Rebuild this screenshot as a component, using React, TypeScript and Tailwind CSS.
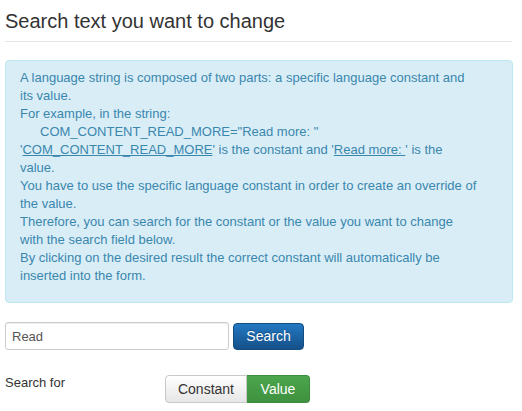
import React, { useState } from "react";

const App: React.FC = () => {
  const [query, setQuery] = useState("Read");
  const [mode, setMode] = useState<"constant" | "value">("value");

  return (
    <div className="min-h-[411px] bg-white px-[5px] pt-[2px] font-['Liberation_Sans',Arial,sans-serif] text-[13px] text-[#333]">
      <h2 className="border-b border-[#e5e5e5] w-[507px] text-[20px] leading-[39px] font-normal text-[#333]">
        Search text you want to change
      </h2>

      <div className="mt-[18px] w-[508px] rounded-[4px] border border-[#bce8f1] bg-[#d9edf7] pl-[14px] pr-[35px] pt-[8px] pb-[17px] text-[13px] leading-[18px] text-[#3a87ad]">
        <p>
          A language string is composed of two parts: a specific language constant and its value.
          <br />
          For example, in the string:
          <br />
          <span className="pl-[20px]">COM_CONTENT_READ_MORE="Read more: "</span>
          <br />
          '<span className="underline">COM_CONTENT_READ_MORE</span>' is the constant and '
          <span className="underline whitespace-pre">Read more: </span>' is the value.
          <br />
          You have to use the specific language constant in order to create an override of the value.
          <br />
          Therefore, you can search for the constant or the value you want to change with the search field below.
          <br />
          By clicking on the desired result the correct constant will automatically be inserted into the form.
        </p>
      </div>

      <form onSubmit={(e) => e.preventDefault()} className="mt-[19px] flex items-center gap-[4px]">
        <input
          type="text"
          value={query}
          onChange={(e) => setQuery(e.target.value)}
          className="h-[28px] w-[224px] rounded-[3px] border border-[#ccc] px-[6px] text-[13px] text-[#555] shadow-[inset_0_1px_1px_rgba(0,0,0,0.075)] focus:outline-none"
        />
        <button
          type="submit"
          className="h-[27px] w-[71px] rounded-[4px] border border-[#124d80] bg-gradient-to-b from-[#2379c2] to-[#15508a] text-[14px] text-white [text-shadow:0_-1px_0_rgba(0,0,0,0.25)]"
        >
          Search
        </button>
      </form>

      <div className="mt-[23px] flex items-start">
        <span className="w-[160px] pt-[1px] leading-[18px]">Search for</span>
        <div className="mt-[2px] flex">
          <button
            onClick={() => setMode("constant")}
            className={`h-[28px] w-[82px] rounded-l-[4px] border text-[14px] ${
              mode === "constant"
                ? "border-[#3d8b3d] bg-gradient-to-b from-[#4ca64c] to-[#3f913f] text-white"
                : "border-[#c8c8c8] bg-gradient-to-b from-white to-[#e6e6e6] text-[#333]"
            }`}
          >
            Constant
          </button>
          <button
            onClick={() => setMode("value")}
            className={`h-[28px] w-[63px] rounded-r-[4px] border border-l-0 text-[14px] ${
              mode === "value"
                ? "border-[#3d8b3d] bg-gradient-to-b from-[#4ca64c] to-[#3f913f] text-white"
                : "border-[#c8c8c8] bg-gradient-to-b from-white to-[#e6e6e6] text-[#333]"
            }`}
          >
            Value
          </button>
        </div>
      </div>
    </div>
  );
};

export default App;
